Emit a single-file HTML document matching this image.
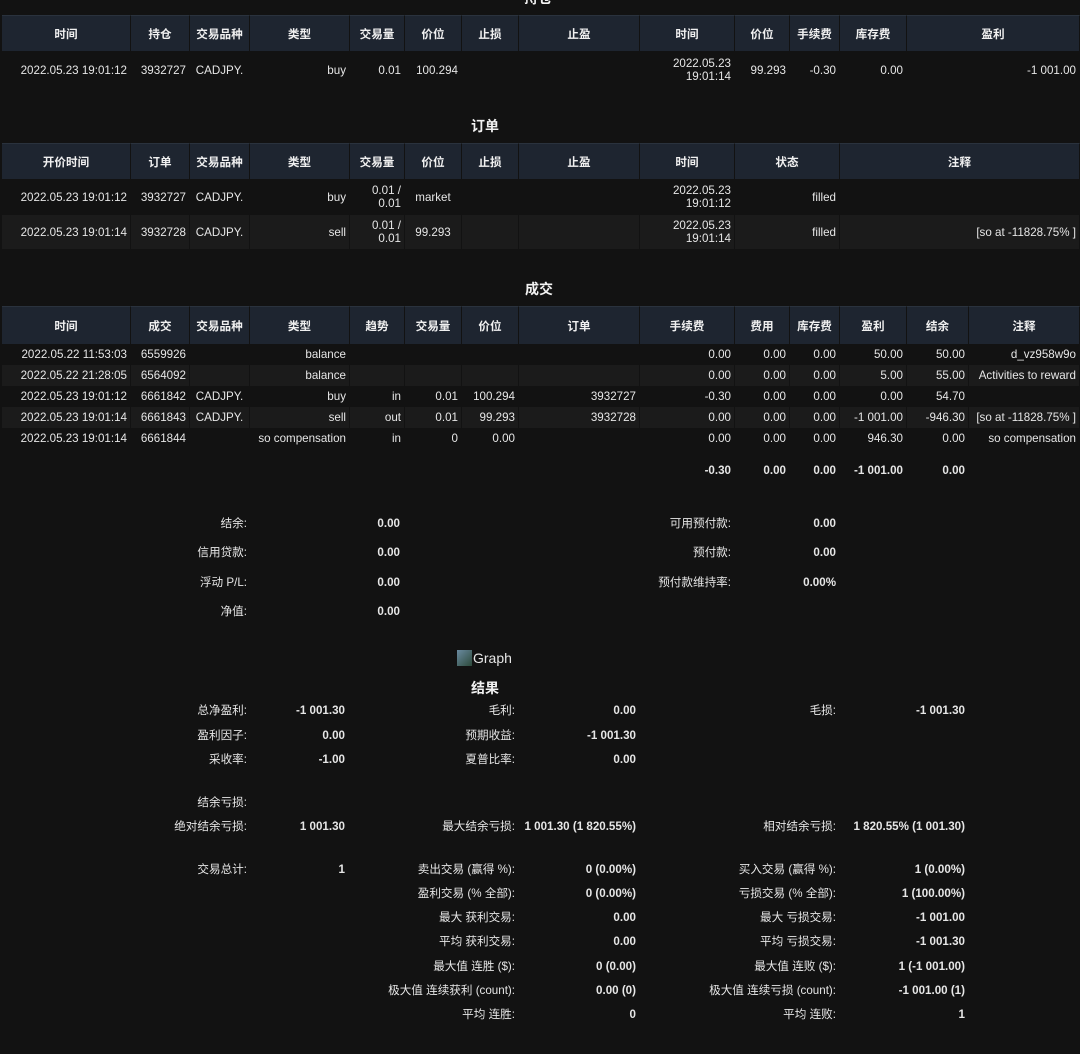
<!DOCTYPE html>
<html><head><meta charset="utf-8"><style>
body{margin:0;width:1080px;height:1054px;background:#121212;color:#e6e6e6;font-family:"Liberation Sans","Noto Sans CJK SC",sans-serif;font-size:11.6px;position:relative;overflow:hidden}
table{position:absolute;left:2px;width:1078px;table-layout:fixed;border-collapse:separate;border-spacing:0;}
th{background:#1e2530;color:#f0f0f0;font-weight:bold;height:36px;text-align:center;padding:0;border-top:1px solid #2a323d;border-right:1px solid #121212;box-sizing:border-box}
td{padding:0 3px;text-align:right;white-space:nowrap;overflow:hidden;border-right:1px solid #121212}
td.c{text-align:center}
tr.alt td{background:#1b1b1b}
.t{position:absolute;font-weight:bold;font-size:14px;color:#f2f2f2}
.a{position:absolute;line-height:14px;white-space:nowrap;text-align:right}
.b{font-weight:bold}
</style></head><body>
<div class="t" style="left:524px;top:-12px">持仓</div>
<table style="top:15px">
<colgroup><col style="width:129px"><col style="width:59px"><col style="width:60px"><col style="width:100px"><col style="width:55px"><col style="width:57px"><col style="width:57px"><col style="width:121px"><col style="width:95px"><col style="width:55px"><col style="width:50px"><col style="width:67px"><col style="width:173px"></colgroup>
<tr><th>时间</th><th>持仓</th><th>交易品种</th><th>类型</th><th>交易量</th><th>价位</th><th>止损</th><th>止盈</th><th>时间</th><th>价位</th><th>手续费</th><th>库存费</th><th>盈利</th></tr>
<tr style="height:38px"><td>2022.05.23 19:01:12</td><td>3932727</td><td class="c">CADJPY.</td><td>buy</td><td>0.01</td><td>100.294</td><td></td><td></td><td>2022.05.23<br>19:01:14</td><td>99.293</td><td>-0.30</td><td>0.00</td><td>-1 001.00</td></tr>
</table>
<div class="t" style="left:471px;top:116px">订单</div>
<table style="top:143px">
<colgroup><col style="width:129px"><col style="width:59px"><col style="width:60px"><col style="width:100px"><col style="width:55px"><col style="width:57px"><col style="width:57px"><col style="width:121px"><col style="width:95px"><col style="width:105px"><col style="width:240px"></colgroup>
<tr><th>开价时间</th><th>订单</th><th>交易品种</th><th>类型</th><th>交易量</th><th>价位</th><th>止损</th><th>止盈</th><th>时间</th><th>状态</th><th>注释</th></tr>
<tr style="height:36px"><td>2022.05.23 19:01:12</td><td>3932727</td><td class="c">CADJPY.</td><td>buy</td><td>0.01 /<br>0.01</td><td class="c">market</td><td></td><td></td><td>2022.05.23<br>19:01:12</td><td>filled</td><td></td></tr>
<tr class="alt" style="height:34px"><td>2022.05.23 19:01:14</td><td>3932728</td><td class="c">CADJPY.</td><td>sell</td><td>0.01 /<br>0.01</td><td class="c">99.293</td><td></td><td></td><td>2022.05.23<br>19:01:14</td><td>filled</td><td>[so at -11828.75% ]</td></tr>
</table>
<div class="t" style="left:525px;top:279px">成交</div>
<table style="top:306px">
<colgroup><col style="width:129px"><col style="width:59px"><col style="width:60px"><col style="width:100px"><col style="width:55px"><col style="width:57px"><col style="width:57px"><col style="width:121px"><col style="width:95px"><col style="width:55px"><col style="width:50px"><col style="width:67px"><col style="width:62px"><col style="width:111px"></colgroup>
<tr><th style="height:38px">时间</th><th>成交</th><th>交易品种</th><th>类型</th><th>趋势</th><th>交易量</th><th>价位</th><th>订单</th><th>手续费</th><th>费用</th><th>库存费</th><th>盈利</th><th>结余</th><th>注释</th></tr>
<tr style="height:21px"><td>2022.05.22 11:53:03</td><td>6559926</td><td></td><td>balance</td><td></td><td></td><td></td><td></td><td>0.00</td><td>0.00</td><td>0.00</td><td>50.00</td><td>50.00</td><td>d_vz958w9o</td></tr>
<tr class="alt" style="height:21px"><td>2022.05.22 21:28:05</td><td>6564092</td><td></td><td>balance</td><td></td><td></td><td></td><td></td><td>0.00</td><td>0.00</td><td>0.00</td><td>5.00</td><td>55.00</td><td>Activities to reward</td></tr>
<tr style="height:21px"><td>2022.05.23 19:01:12</td><td>6661842</td><td class="c">CADJPY.</td><td>buy</td><td>in</td><td>0.01</td><td>100.294</td><td>3932727</td><td>-0.30</td><td>0.00</td><td>0.00</td><td>0.00</td><td>54.70</td><td></td></tr>
<tr class="alt" style="height:21px"><td>2022.05.23 19:01:14</td><td>6661843</td><td class="c">CADJPY.</td><td>sell</td><td>out</td><td>0.01</td><td>99.293</td><td>3932728</td><td>0.00</td><td>0.00</td><td>0.00</td><td>-1 001.00</td><td>-946.30</td><td>[so at -11828.75% ]</td></tr>
<tr style="height:21px"><td>2022.05.23 19:01:14</td><td>6661844</td><td></td><td>so compensation</td><td>in</td><td>0</td><td>0.00</td><td></td><td>0.00</td><td>0.00</td><td>0.00</td><td>946.30</td><td>0.00</td><td>so compensation</td></tr>
<tr class="b" style="height:42px"><td></td><td></td><td></td><td></td><td></td><td></td><td></td><td></td><td>-0.30</td><td>0.00</td><td>0.00</td><td>-1 001.00</td><td>0.00</td><td></td></tr>
</table>

<div class="a" style="right:833px;top:517px">结余:</div><div class="a b" style="right:680px;top:517px">0.00</div>
<div class="a" style="right:833px;top:546px">信用贷款:</div><div class="a b" style="right:680px;top:546px">0.00</div>
<div class="a" style="right:833px;top:576px">浮动 P/L:</div><div class="a b" style="right:680px;top:576px">0.00</div>
<div class="a" style="right:833px;top:605px">净值:</div><div class="a b" style="right:680px;top:605px">0.00</div>
<div class="a" style="right:349px;top:517px">可用预付款:</div><div class="a b" style="right:244px;top:517px">0.00</div>
<div class="a" style="right:349px;top:546px">预付款:</div><div class="a b" style="right:244px;top:546px">0.00</div>
<div class="a" style="right:349px;top:576px">预付款维持率:</div><div class="a b" style="right:244px;top:576px">0.00%</div>

<div style="position:absolute;left:457px;top:650px;width:15px;height:16px;background:linear-gradient(135deg,#6a8aa0,#2c4a3a);"></div>
<div class="a" style="left:473px;top:650px;font-size:14px;line-height:16px">Graph</div>
<div class="t" style="left:471px;top:678px">结果</div>

<div class="a" style="right:833px;top:704px">总净盈利:</div><div class="a b" style="right:735px;top:704px">-1 001.30</div>
<div class="a" style="right:833px;top:729px">盈利因子:</div><div class="a b" style="right:735px;top:729px">0.00</div>
<div class="a" style="right:833px;top:753px">采收率:</div><div class="a b" style="right:735px;top:753px">-1.00</div>
<div class="a" style="right:833px;top:796px">结余亏损:</div>
<div class="a" style="right:833px;top:820px">绝对结余亏损:</div><div class="a b" style="right:735px;top:820px">1 001.30</div>
<div class="a" style="right:833px;top:863px">交易总计:</div><div class="a b" style="right:735px;top:863px">1</div>

<div class="a" style="right:565px;top:704px">毛利:</div><div class="a b" style="right:444px;top:704px">0.00</div>
<div class="a" style="right:565px;top:729px">预期收益:</div><div class="a b" style="right:444px;top:729px">-1 001.30</div>
<div class="a" style="right:565px;top:753px">夏普比率:</div><div class="a b" style="right:444px;top:753px">0.00</div>
<div class="a" style="right:565px;top:820px">最大结余亏损:</div><div class="a b" style="right:444px;top:820px">1 001.30 (1 820.55%)</div>
<div class="a" style="right:565px;top:863px">卖出交易 (赢得 %):</div><div class="a b" style="right:444px;top:863px">0 (0.00%)</div>
<div class="a" style="right:565px;top:887px">盈利交易 (% 全部):</div><div class="a b" style="right:444px;top:887px">0 (0.00%)</div>
<div class="a" style="right:565px;top:911px">最大 获利交易:</div><div class="a b" style="right:444px;top:911px">0.00</div>
<div class="a" style="right:565px;top:935px">平均 获利交易:</div><div class="a b" style="right:444px;top:935px">0.00</div>
<div class="a" style="right:565px;top:960px">最大值 连胜 ($):</div><div class="a b" style="right:444px;top:960px">0 (0.00)</div>
<div class="a" style="right:565px;top:984px">极大值 连续获利 (count):</div><div class="a b" style="right:444px;top:984px">0.00 (0)</div>
<div class="a" style="right:565px;top:1008px">平均 连胜:</div><div class="a b" style="right:444px;top:1008px">0</div>

<div class="a" style="right:244px;top:704px">毛损:</div><div class="a b" style="right:115px;top:704px">-1 001.30</div>
<div class="a" style="right:244px;top:820px">相对结余亏损:</div><div class="a b" style="right:115px;top:820px">1 820.55% (1 001.30)</div>
<div class="a" style="right:244px;top:863px">买入交易 (赢得 %):</div><div class="a b" style="right:115px;top:863px">1 (0.00%)</div>
<div class="a" style="right:244px;top:887px">亏损交易 (% 全部):</div><div class="a b" style="right:115px;top:887px">1 (100.00%)</div>
<div class="a" style="right:244px;top:911px">最大 亏损交易:</div><div class="a b" style="right:115px;top:911px">-1 001.00</div>
<div class="a" style="right:244px;top:935px">平均 亏损交易:</div><div class="a b" style="right:115px;top:935px">-1 001.30</div>
<div class="a" style="right:244px;top:960px">最大值 连败 ($):</div><div class="a b" style="right:115px;top:960px">1 (-1 001.00)</div>
<div class="a" style="right:244px;top:984px">极大值 连续亏损 (count):</div><div class="a b" style="right:115px;top:984px">-1 001.00 (1)</div>
<div class="a" style="right:244px;top:1008px">平均 连败:</div><div class="a b" style="right:115px;top:1008px">1</div>
</body></html>
